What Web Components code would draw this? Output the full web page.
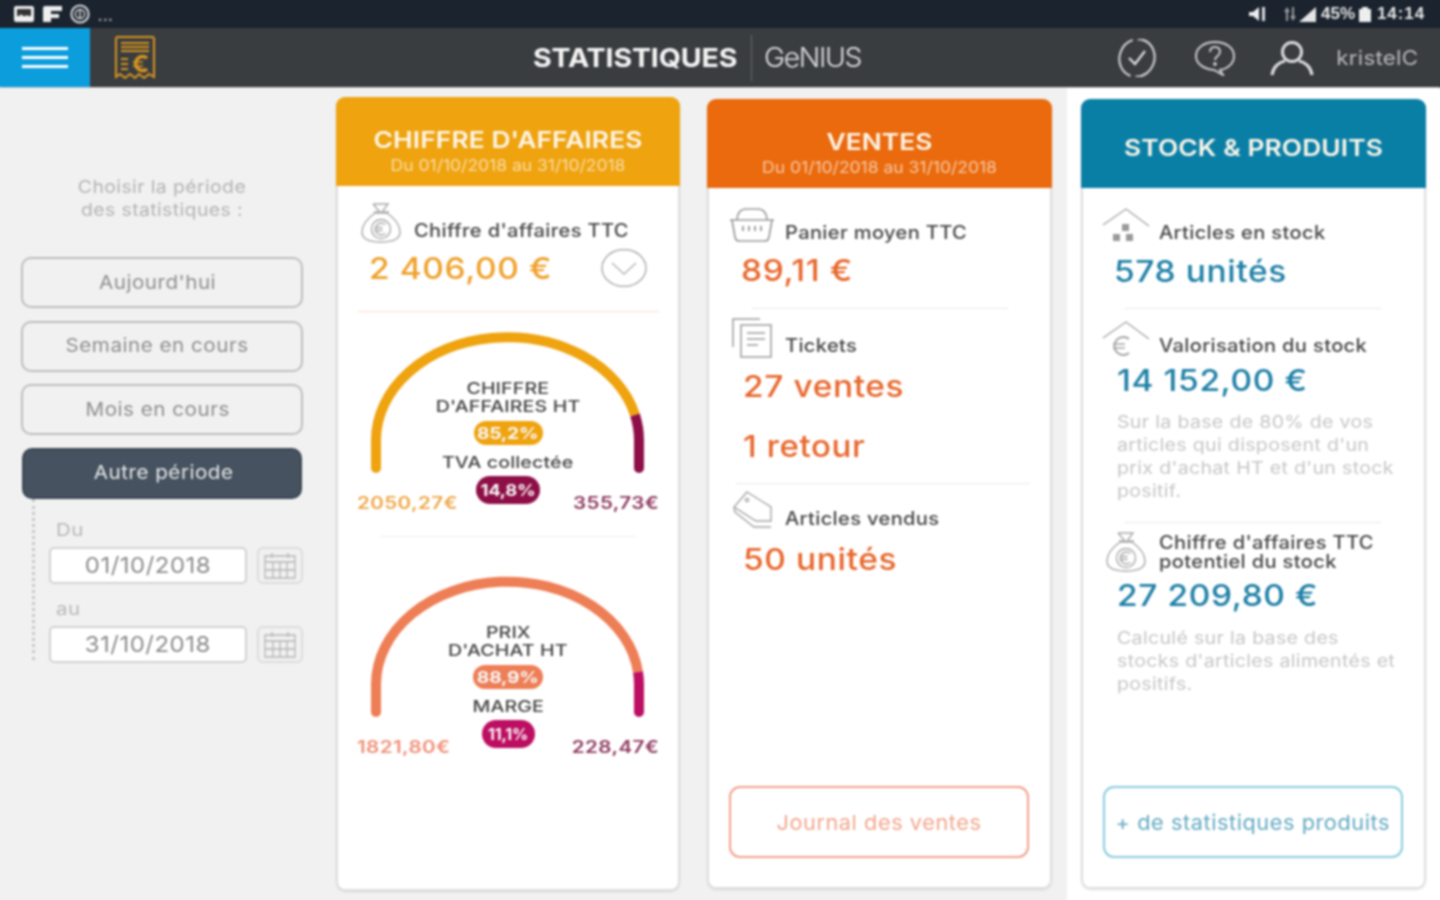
<!DOCTYPE html>
<html lang="fr"><head><meta charset="utf-8"><title>Statistiques</title>
<style>
html,body{margin:0;padding:0;width:1440px;height:900px;overflow:hidden;background:#fff;font-family:Inter,"Liberation Sans",sans-serif}
genius-app{filter:blur(.85px)}
</style></head><body>
<genius-app></genius-app>
<script>
const ICONS={
 bag:`<svg viewBox="0 0 40 40" width="40" height="40" fill="none" stroke="#a9a9a9" stroke-width="1.4"><path d="M12 1h15l-6 8 7 0M12 1l7 8h-6"/><path d="M14 10c-7 5-13 12-13 19 0 8 8 10 19 10s19-2 19-10c0-7-6-14-13-19z"/><circle cx="20" cy="26" r="9.5"/><path d="M24.5 21.5a6 6 0 1 0 0 9M13.5 24.5h8M13.5 27.5h8"/></svg>`,
 basket:`<svg viewBox="0 0 46 34" width="46" height="34" fill="none" stroke="#9a9a9a" stroke-width="1.7"><path d="M1 12h44"/><path d="M3 12l3 17c.4 2 2 4 4 4h26c2 0 3.600-2 4-4l3-17"/><path d="M8 12c0-6 3-11 9-11h12c6 0 9 5 9 11"/><path d="M14 18v5M20 18v5M26 18v5M32 18v5" stroke-width="1.9"/></svg>`,
 tickets:`<svg viewBox="0 0 40 42" width="40" height="42" fill="none" stroke="#9a9a9a" stroke-width="1.5"><path d="M1 30V2h27"/><path d="M9 8h30v32H9z"/><path d="M15 16h18M15 22h18M15 28h11"/></svg>`,
 tag:`<svg viewBox="0 0 42 42" width="42" height="42" fill="none" stroke="#a5a5a5" stroke-width="1.4"><path d="M15 2l24 15v14H24L2 17z"/><path d="M2 18l1 4 19 15h17"/><circle cx="15" cy="10" r="1.6"/></svg>`,
 home:`<svg viewBox="0 0 48 36" width="48" height="36" fill="none"><path d="M1 17L24 1l23 17" stroke="#a5a5a5" stroke-width="1.4"/><rect x="20" y="16" width="7" height="7" fill="#9a9a9a"/><rect x="11" y="26" width="7" height="7" fill="#9a9a9a"/><rect x="24" y="26" width="7" height="7" fill="#9a9a9a"/></svg>`,
 homeeuro:`<svg viewBox="0 0 48 36" width="48" height="36" fill="none" stroke="#a5a5a5"><path d="M1 17L24 1l23 17" stroke-width="1.4"/><path d="M27 18a9 9 0 1 0 0 14" stroke-width="2"/><path d="M11 23h12M11 27h12" stroke-width="1.6"/></svg>`
};
function def(name,html,init){
 const t=document.createElement('template');t.innerHTML=html;
 customElements.define(name,class extends HTMLElement{
  constructor(){super();this.attachShadow({mode:'open'}).appendChild(t.content.cloneNode(true));}
  connectedCallback(){if(init)init.call(this,this.shadowRoot);}
 });
}
def('ui-icon',`<style>:host{display:block;line-height:0}</style><span id="i"></span>`);

def('status-bar',`<style>
:host{display:flex;align-items:center;height:28px;background:#1a232e;color:#e4e4e4;padding:0 15px 0 14px;font:700 17px "Liberation Sans",sans-serif;box-sizing:border-box;box-shadow:0 -8px 0 #1a232e,-8px 0 0 #1a232e,8px 0 0 #1a232e,-8px -8px 0 #1a232e,8px -8px 0 #1a232e}
.l,.r{display:flex;align-items:center}.sp{flex:1}
svg{display:block}
.dots{font-size:15px;margin:2px 0 0 8px;color:#aaa;letter-spacing:1px}
.pct{margin-left:5px}.time{margin-left:5px;letter-spacing:.9px}
</style>
<div class="l">
<svg width="20" height="16" viewBox="0 0 20 16"><rect width="20" height="16" rx="2" fill="#eee"/><rect x="3" y="3" width="14" height="7" fill="#333"/><path d="M3 13l4-5 3 3 3-2 4 4z" fill="#eee"/></svg>
<svg width="19" height="16" viewBox="0 0 19 16" style="margin-left:9px"><path d="M0 16V2a2 2 0 0 1 2-2h17v5H8v3h8v4H8v4z" fill="#eee"/></svg>
<svg width="20" height="20" viewBox="0 0 20 20" style="margin-left:8px" fill="none" stroke="#ddd"><circle cx="10" cy="10" r="8.6" stroke-width="2"/><circle cx="10" cy="10" r="4.6" stroke-width="1.5"/><path d="M10 5v10" stroke-width="1.5"/></svg>
<span class="dots">...</span>
</div><div class="sp"></div>
<div class="r">
<svg width="20" height="14" viewBox="0 0 20 14"><path d="M0 5h4l6-5v14l-6-5H0z" fill="#eee"/><path d="M13 0h3v14h-3z" fill="#eee" opacity=".9"/></svg>
<svg width="16" height="14" viewBox="0 0 16 14" style="margin-left:13px" fill="#999"><path d="M5 0l3 5H6v9H4V5H2zM11 14l-3-5h2V0h2v9h2z"/></svg>
<svg width="17" height="15" viewBox="0 0 17 15" style="margin-left:1px" fill="#e4e4e4"><path d="M0 15L17 0v15z"/></svg>
<span class="pct">45%</span>
<svg width="14" height="15" viewBox="0 0 14 15" style="margin-left:3px"><path d="M4 0h6v2h3v13H1V2h3z" fill="#eee"/></svg>
<span class="time">14:14</span>
</div>`);

def('app-header',`<style>
:host{display:flex;align-items:center;height:60px;background:#3a3d40;border-bottom:1px solid #c8c8c8;box-sizing:border-box;box-shadow:8px 0 0 #3a3d40}
.menu{width:90px;height:59px;background:#0b9ddc;display:flex;flex-direction:column;gap:6px;align-items:center;justify-content:center;box-shadow:-8px 0 0 #0b9ddc}
.menu i{display:block;width:46px;height:3px;background:#fff}
.rc{margin-left:25px;display:block}
.center{flex:1;display:flex;align-items:center;margin-left:378px}
.t{font-weight:700;font-size:26px;letter-spacing:-.15px;color:#f4f4f4;width:218px;transform:scaleX(1.1);transform-origin:left;white-space:nowrap}
.sep{width:1px;height:46px;background:#666}
.g{font-weight:300;font-size:27px;color:#e0e0e0;margin-left:12px;letter-spacing:-1.3px;transform:scaleX(1.05);transform-origin:left}
.right{display:flex;align-items:center;padding-right:22px}
.u{font-size:20px;color:#b9b9b9;margin-left:31px;letter-spacing:.2px;transform:scaleX(1.12);transform-origin:right}
svg{display:block}
</style>
<div class="menu"><i></i><i></i><i></i></div>
<svg class="rc" width="40" height="44" viewBox="0 0 40 44" fill="none" stroke="#d6951f" stroke-width="2"><path d="M1 41V3a2 2 0 0 1 2-2h34a2 2 0 0 1 2 2v38l-5-3-5 4-5-4-4 4-5-4-5 4-5-4z"/><path d="M6 7h28M6 11h28M6 15h28" stroke-width="2"/><path d="M6 23h7M6 28h7M6 33h7" stroke-width="2"/><path d="M32 22a7 7 0 1 0 0 11" stroke-width="3.500"/><path d="M18 26h10M18 30h10" stroke-width="1.6"/></svg>
<div class="center"><span class="t">STATISTIQUES</span><span class="sep"></span><span class="g">GeNIUS</span></div>
<div class="right">
<svg width="42" height="38" viewBox="0 0 42 38" fill="none" stroke="#c9c9c9" stroke-width="2.2"><ellipse cx="21" cy="19" rx="19" ry="17.500" stroke-dasharray="52 5 46 5" transform="rotate(-70 21 19)"/><path d="M13 19l6 6 10-13" stroke="#ddd"/></svg>
<svg width="42" height="36" viewBox="0 0 42 36" fill="none" stroke="#c9c9c9" stroke-width="2" style="margin-left:36px"><path d="M21 2c11 0 19 6 19 14s-7 13-14 14l3 5-9-5C10 29 2 24 2 16S10 2 21 2z"/><path d="M16 12c0-3 2-5 5-5s5 2 5 5c0 4-5 4-5 8"/><circle cx="21" cy="24" r=".9"/></svg>
<svg width="44" height="36" viewBox="0 0 44 36" fill="none" stroke="#dcdcdc" stroke-width="3" style="margin-left:34px"><circle cx="22" cy="12" r="9.500"/><path d="M2 35c1-8 7-13 13-14M42 35c-1-8-7-13-13-14"/></svg>
<span class="u">kristelC</span>
</div>`);

def('period-button',`<style>
:host{display:flex;align-items:center;justify-content:center;box-sizing:border-box;height:51px;width:282px;border:2px solid #bdbdbd;border-radius:10px;background:#f1f1f1;color:#8e8e8e;font-size:18.500px;letter-spacing:.45px;padding:0 9px 2px 0}
:host([active]){background:#465260;border-color:#3c4754;color:#e8e8e8;padding:0 0 2px 3px;width:280px;margin-left:1px}
.w{display:block;transform:scaleX(1.115);white-space:nowrap}
</style><span class="w"><slot></slot></span>`);

def('date-field',`<style>
:host{display:block}
.lb{font-size:17px;color:#b8b8b8;height:22px;line-height:22px;margin-left:7px;letter-spacing:.5px;transform:scaleX(1.2);transform-origin:left}
.row{display:flex;gap:10px;margin-top:6px}
.v{box-sizing:border-box;width:198px;height:37px;background:#fff;border:2px solid #d2d2d2;border-radius:5px;display:flex;align-items:center;justify-content:center;color:#8c8c8c;font-size:22px;letter-spacing:.45px}
.v span{display:block;transform:scaleX(1.09)}
.c{box-sizing:border-box;width:46px;height:37px;border:2px solid #dcdcdc;border-radius:6px;display:flex;align-items:center;justify-content:center}
</style><div class="lb"></div><div class="row"><div class="v"><span></span></div><div class="c"><svg width="32" height="27" viewBox="0 0 32 27" fill="none" stroke="#b4b4b4" stroke-width="1.3"><path d="M1 4h30v22H1zM1 10h30M1 18h30M9 10v16M16 10v16M23 10v16"/><path d="M8 1v5M24 1v5"/></svg></div></div>`,
function(r){r.querySelector('.lb').textContent=this.getAttribute('label');r.querySelector('.v span').textContent=this.getAttribute('value');});

def('period-panel',`<style>
:host{display:flex;flex-direction:column;width:336px;box-sizing:border-box;padding:87px 0 0 21px;flex:none}
.h{width:282px;text-align:center;font-size:17.500px;line-height:23px;color:#b3b3b3;letter-spacing:.35px;margin-bottom:36px;transform:scaleX(1.11)}
.btns{display:flex;flex-direction:column;gap:12.500px}
.range{margin:0 0 0 11px;border-left:3px dotted #c8c8c8;padding:20px 0 0 14px;height:141px;width:256px;display:flex;flex-direction:column;gap:14px}
</style>
<div class="h"><slot name="title"></slot></div>
<div class="btns"><slot name="buttons"></slot></div>
<div class="range"><slot name="dates"></slot></div>`);

def('stat-card',`<style>
:host{display:flex;flex-direction:column;box-sizing:border-box;width:345px;border-radius:9px;overflow:hidden;flex:none;box-shadow:0 1px 2px rgba(0,0,0,.12)}
.head{height:89px;box-sizing:border-box;background:var(--c);text-align:center;color:#fff;padding-top:var(--pt,29px);flex:none}
.t{font-weight:600;font-size:23.500px;line-height:28px;letter-spacing:.1px;color:#fdf6ea;transform:scaleX(1.12)}
.s{font-size:16.500px;line-height:20px;margin-top:1px;color:rgba(255,255,255,.62);letter-spacing:-.02px;transform:scaleX(1.063)}
.body{flex:1;display:flex;flex-direction:column;padding-top:23px;min-height:0;background:#fff;border:2px solid #dedede;border-top:0;border-radius:0 0 9px 9px}
</style>
<div class="head"><div class="t"><slot name="title"></slot></div><div class="s"><slot name="sub"></slot></div></div>
<div class="body"><slot></slot></div>`);

def('stat-item',`<style>
:host{display:block;margin-top:var(--mt,0)}
.head{display:grid;grid-template-columns:76px 1fr;height:42px;align-items:center}
.ic{margin-left:var(--ix,20px);margin-top:var(--iy,-14px);width:0}
.lb{font-weight:500;font-size:18px;line-height:19px;color:#464646;letter-spacing:.32px;white-space:nowrap;transform:scaleX(1.115);transform-origin:left}
.val{display:flex;align-items:center;height:34px;margin-top:var(--vm,0);padding-left:var(--vx,32px);padding-right:31px;font-weight:500;font-size:30px;color:var(--vc);letter-spacing:.55px;white-space:nowrap}
.vt{display:block;transform:scaleX(1.115);transform-origin:left}
.val ::slotted([slot=aside]){margin-left:auto}
.note{display:block;padding-left:34px;font-size:17px;line-height:23px;color:#c6c6c6;letter-spacing:.28px;margin-top:var(--nt,14px)}
.note span{display:block;transform:scaleX(1.15);transform-origin:left;white-space:nowrap}
</style>
<div class="head"><ui-icon class="ic"></ui-icon><div class="lb"><slot name="label"></slot></div></div>
<div class="val"><span class="vt"><slot name="value"></slot></span><slot name="aside"></slot></div>
<div class="note" id="n"><span><slot></slot></span></div>`,
function(r){r.querySelector('ui-icon').shadowRoot.getElementById('i').innerHTML=ICONS[this.getAttribute('icon')];
 r.getElementById('n').style.display=this.hasAttribute('note')?'block':'none';});

def('extra-value',`<style>:host{display:block;height:34px;line-height:34px;padding-left:var(--vx,37px);margin-top:26px;font-weight:500;font-size:30px;letter-spacing:.55px;color:var(--vc)}span{display:block;transform:scaleX(1.1);transform-origin:left}</style><span><slot></slot></span>`);

def('stat-line',`<style>:host{display:block;height:1px;flex:none;background:var(--lc,#e9e9e9);margin:var(--mt,20px) var(--r,44px) var(--mb,0) var(--l,44px)}</style>`);

def('round-chevron',`<style>:host{display:block;line-height:0}</style><svg width="46" height="38" viewBox="0 0 46 38" fill="none" stroke="#a8a8a8" stroke-width="1.4"><ellipse cx="23" cy="19" rx="22" ry="18.500"/><path d="M11 14l12 11 12-11" stroke="#b5b5b5"/></svg>`);

def('action-button',`<style>:host{display:flex;align-items:center;justify-content:center;box-sizing:border-box;height:72px;margin:auto 21px 29px 20px;flex:none;background:#fff;border:2px solid var(--bc);border-radius:11px;color:var(--tc);font-size:20.500px;letter-spacing:.55px;white-space:nowrap}span{display:block;transform:scaleX(1.057)}</style><span><slot></slot></span>`);

def('gauge-chart',`<style>
:host{display:block;position:relative;width:302px;height:185px;margin:var(--mt,18px) 0 0 19px;flex:none;text-align:center}
svg{position:absolute;left:0;top:0}
.in{position:relative;padding-top:49px;display:flex;flex-direction:column;align-items:center}
.t{font-weight:500;font-size:16px;line-height:18px;color:#444;letter-spacing:.1px;white-space:nowrap;height:18px;transform:scaleX(1.225)}
.p{display:flex;align-items:center;justify-content:center;color:#f7f7f7;font-weight:700;font-size:16px;border-radius:14px;letter-spacing:-.15px}
.p1{width:var(--w1,69px);height:24px;margin-top:6px;background:var(--a)}
.p span{display:block;transform:scaleX(var(--ps,1.2))}
.t2{margin-top:8px}
.p2{width:var(--w2,64px);height:28px;margin-top:5px;background:var(--b)}
.p2 span{transform:scaleX(var(--ps2,1.15))}
.vals{align-self:stretch;display:flex;justify-content:space-between;font-weight:600;font-size:17px;line-height:18px;margin-top:-10px;letter-spacing:.35px}
.v1{color:var(--av);transform:scaleX(1.21);transform-origin:left}.v2{color:var(--bv);transform:scaleX(1.21);transform-origin:right}
</style>
<svg width="302" height="185" viewBox="0 0 302 185" fill="none" stroke-width="10"><path class="a1" stroke="var(--a)"/><path class="b1" stroke="var(--b)"/><circle cx="19" cy="138" r="5" fill="var(--a)" stroke="none"/><circle cx="282" cy="138" r="5" fill="var(--b)" stroke="none"/></svg>
<div class="in"><div class="t"><slot name="l1"></slot></div><div class="t"><slot name="l2"></slot></div><div class="p p1"><span><slot name="p1"></slot></span></div><div class="t t2"><slot name="l3"></slot></div><div class="p p2"><span><slot name="p2"></slot></span></div><div class="vals"><span class="v1"><slot name="v1"></slot></span><span class="v2"><slot name="v2"></slot></span></div></div>`,
function(r){const [x,y]=this.getAttribute('split').split(',');
 r.querySelector('.a1').setAttribute('d',`M19 138V110A131.5 103 0 0 1 ${x} ${y}`);
 r.querySelector('.b1').setAttribute('d',`M${x} ${y}A131.5 103 0 0 1 282 110V138`);});

def('genius-app',`<style>
:host{display:flex;flex-direction:column;width:1440px;height:900px}
main{flex:1;display:flex;min-height:0}
.gray{width:1067px;background:#f1f1f1;display:flex;flex:none;box-shadow:-8px 0 0 #f1f1f1,0 8px 0 #f1f1f1,-8px 8px 0 #f1f1f1}
.white{flex:1;background:#fff;display:flex;padding:11px 0 11px 14px}
.c1{display:flex;padding:9px 0 9px 0}
.c2{display:flex;padding:11px 0 11px 27px}
</style>
<status-bar></status-bar><app-header></app-header>
<main><div class="gray"><slot name="panel"></slot><div class="c1"><slot name="c1"></slot></div><div class="c2"><slot name="c2"></slot></div></div><div class="white"><slot name="c3"></slot></div></main>`);

document.querySelector('genius-app').innerHTML=`
<period-panel slot="panel">
 <span slot="title">Choisir la période<br>des statistiques :</span>
 <period-button slot="buttons">Aujourd'hui</period-button>
 <period-button slot="buttons">Semaine en cours</period-button>
 <period-button slot="buttons">Mois en cours</period-button>
 <period-button slot="buttons" active>Autre période</period-button>
 <date-field slot="dates" label="Du" value="01/10/2018"></date-field>
 <date-field slot="dates" label="au" value="31/10/2018"></date-field>
</period-panel>

<stat-card slot="c1" style="--c:#efa30f;--vc:#efa12c;width:344px">
 <span slot="title">CHIFFRE D'AFFAIRES</span><span slot="sub">Du 01/10/2018 au 31/10/2018</span>
 <stat-item icon="bag" style="--ix:23px;--iy:-14px;--vx:31px">
  <span slot="label">Chiffre d'affaires TTC</span><span slot="value">2 406,00 €</span><round-chevron slot="aside"></round-chevron>
 </stat-item>
 <stat-line style="--mt:26px;--l:20px;--r:19px;--lc:#fbdccb"></stat-line>
 <gauge-chart split="278,85" style="--a:#efa30f;--b:#8e0f47;--av:#efa84a;--bv:#8e3a60;--w1:69px;--w2:64px">
  <span slot="l1">CHIFFRE</span><span slot="l2">D'AFFAIRES HT</span><span slot="p1">85,2%</span><span slot="l3">TVA collectée</span><span slot="p2">14,8%</span><span slot="v1">2050,27€</span><span slot="v2">355,73€</span>
 </gauge-chart>
 <stat-line style="--mt:21px;--l:42px;--r:42px;--lc:#f0f0f0"></stat-line>
 <gauge-chart split="281,98" style="--mt:37px;--a:#ee7e55;--b:#bd0f62;--av:#f0917a;--bv:#8e3a60;--w1:70px;--w2:53px;--ps2:1">
  <span slot="l1">PRIX</span><span slot="l2">D'ACHAT HT</span><span slot="p1">88,9%</span><span slot="l3">MARGE</span><span slot="p2">11,1%</span><span slot="v1">1821,80€</span><span slot="v2">228,47€</span>
 </gauge-chart>
</stat-card>

<stat-card slot="c2" style="--c:#ea6a0d;--vc:#e8672c">
 <span slot="title">VENTES</span><span slot="sub">Du 01/10/2018 au 31/10/2018</span>
 <stat-item icon="basket" style="--ix:20px;--iy:-14px;--vx:32px">
  <span slot="label">Panier moyen TTC</span><span slot="value">89,11 €</span>
 </stat-item>
 <stat-line style="--mt:21px;--l:43px;--r:42px"></stat-line>
 <stat-item icon="tickets" style="--mt:15px;--ix:23px;--iy:-14px;--vx:34px;--vm:3px">
  <span slot="label">Tickets</span><span slot="value">27 ventes</span>
 </stat-item>
 <extra-value style="--vx:34px">1 retour</extra-value>
 <stat-line style="--mt:20px;--l:27px;--r:20px"></stat-line>
 <stat-item icon="tag" style="--mt:13px;--ix:23px;--iy:-14px;--vx:34px;--vm:3px">
  <span slot="label">Articles vendus</span><span slot="value">50 unités</span>
 </stat-item>
 <action-button style="--bc:#f2a08a;--tc:#f2a68c">Journal des ventes</action-button>
</stat-card>

<stat-card slot="c3" style="--c:#0a7fa6;--vc:#1f80a6;--pt:35px">
 <span slot="title">STOCK &amp; PRODUITS</span>
 <stat-item icon="home" style="--ix:19px;--iy:-12px;--vx:31px;--vm:1px">
  <span slot="label">Articles en stock</span><span slot="value">578 unités</span>
 </stat-item>
 <stat-line style="--mt:20px;--l:42px;--r:43px"></stat-line>
 <stat-item icon="homeeuro" note style="--mt:15px;--ix:19px;--iy:-12px;--vx:34px;--vm:-3px">
  <span slot="label">Valorisation du stock</span><span slot="value">14 152,00 €</span>
  Sur la base de 80% de vos<br>articles qui disposent d'un<br>prix d'achat HT et d'un stock<br>positif.
 </stat-item>
 <stat-line style="--mt:19px;--l:42px;--r:43px"></stat-line>
 <stat-item icon="bag" note style="--mt:7.5px;--ix:23px;--iy:0px;--vx:34px;--vm:5.5px;--nt:15px">
  <span slot="label">Chiffre d'affaires TTC<br>potentiel du stock</span><span slot="value">27 209,80 €</span>
  Calculé sur la base des<br>stocks d'articles alimentés et<br>positifs.
 </stat-item>
 <action-button style="--bc:#8accdf;--tc:#63a9c2">+ de statistiques produits</action-button>
</stat-card>`;
</script>
</body></html>
